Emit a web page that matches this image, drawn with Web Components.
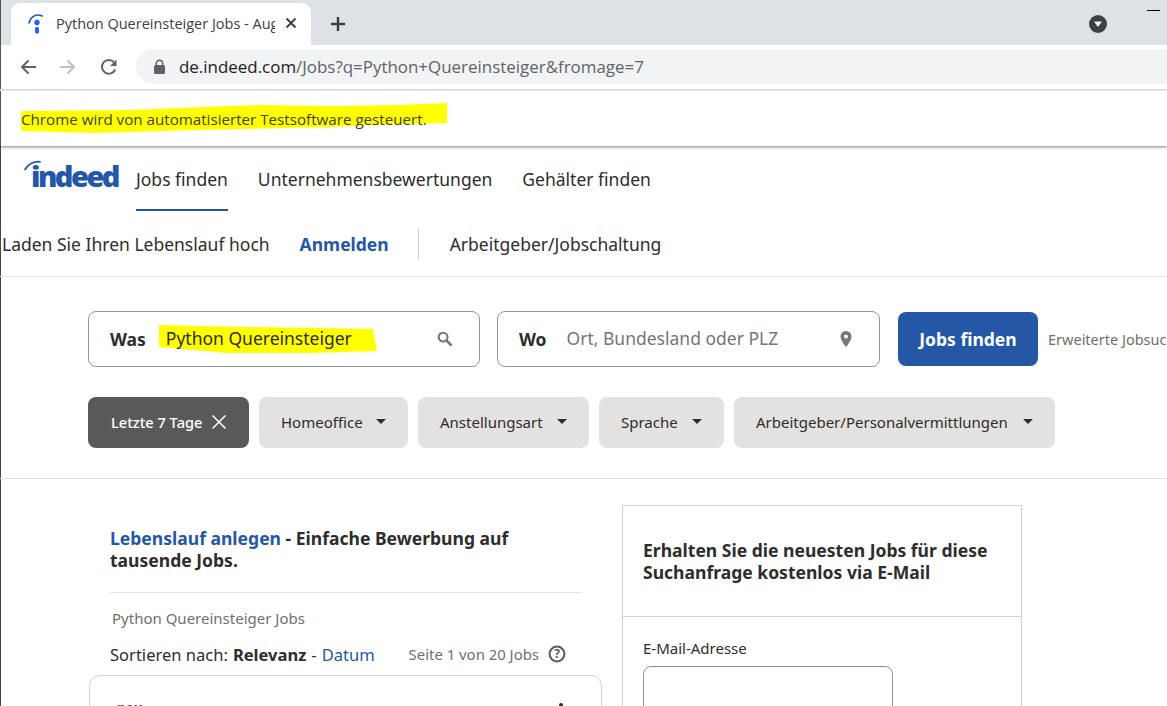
<!DOCTYPE html>
<html><head><meta charset="utf-8"><title>Python Quereinsteiger Jobs</title>
<style>
html,body{margin:0;padding:0;background:#fff}
body{width:1167px;height:706px;overflow:hidden;font-family:"Noto Sans","Open Sans",sans-serif;color:#2d2d2d}
</style></head><body>
<browser-chrome></browser-chrome>
<info-bar>Chrome wird von automatisierter Testsoftware gesteuert.</info-bar>
<site-page></site-page>
<script>
function def(name,html){customElements.define(name,class extends HTMLElement{constructor(){super();this.attachShadow({mode:'open'}).innerHTML=html}})}
def('browser-chrome',`<style>
:host{display:block;height:91px;font-family:"Noto Sans",sans-serif}
.strip{height:45px;background:#dee1e6;display:flex;align-items:flex-end;padding-left:11px;position:relative;box-shadow:inset 1px 0 #555}
.tab{width:300px;height:42px;background:#fff;border-radius:9px 9px 0 0;box-sizing:border-box;display:flex;align-items:center;padding-left:17px;position:relative;margin-right:19px}
.tab span{font:14.5px/20px "Open Sans","Noto Sans",sans-serif;color:#3c4043;margin-left:12px;width:219px;white-space:nowrap;overflow:hidden}
.tab svg.x{margin-left:10px;position:relative;top:-1px}
.plus{margin-bottom:13px}
.prof{position:absolute;left:1089px;top:15px}
.min{position:absolute;left:1147px;top:10px;width:13px;height:1px;background:#000}
.bar{height:45px;box-sizing:border-box;border-bottom:1px solid #dcdcdc;display:flex;align-items:center;padding-left:19px;background:#fff;box-shadow:inset 1px 0 #555}
.addr{margin-left:18px;flex:1;height:35px;margin-top:-1px;background:#f1f3f4;border-radius:18px 0 0 18px;display:flex;align-items:center;padding-left:17px;font:16.93px/24px "Open Sans","Noto Sans",sans-serif;color:#5f6368;white-space:nowrap}
.addr b{font-weight:400;color:#202124}
.addr svg{margin-right:13px}
.ic{display:block;margin-right:22px}
</style>
<div class="strip">
 <div class="tab">
  <svg width="16" height="20" viewBox="0 0 16 20"><path d="M1 9C2 4 6 1 10 1c1.500 0 3 .4 4 1" fill="none" stroke="#2557a7" stroke-width="1.700" stroke-linecap="round"/><circle cx="9" cy="8.500" r="2.700" fill="#2164f3"/><rect x="7" y="13" width="4" height="6.500" rx="1.500" fill="#2164f3"/></svg>
  <span>Python Quereinsteiger Jobs - Augsburg</span>
  <svg class="x" width="12" height="12" viewBox="0 0 12 12"><path d="M1.500 1.500l9 9M10.500 1.500l-9 9" stroke="#3c4043" stroke-width="1.900"/></svg>
 </div>
 <svg class="plus" width="16" height="16" viewBox="0 0 16 16"><path d="M8 1v14M1 8h14" stroke="#3c4043" stroke-width="2.400"/></svg>
 <svg class="prof" width="18" height="18" viewBox="0 0 18 18"><circle cx="9" cy="9" r="9" fill="#3c4043"/><path d="M5 6.500h8L9 12z" fill="#f1f3f4"/></svg>
 <div class="min"></div>
</div>
<div class="bar">
 <svg class="ic" width="18" height="18" viewBox="0 0 18 18"><path d="M17 9H3M9.500 2.500L3 9l6.500 6.500" fill="none" stroke="#5f6368" stroke-width="2"/></svg>
 <svg class="ic" style="margin-right:23px" width="18" height="18" viewBox="0 0 18 18"><path d="M1 9h14M8.500 2.500L15 9l-6.500 6.500" fill="none" stroke="#bdc1c6" stroke-width="2"/></svg>
 <svg class="ic" style="margin-right:0" width="18" height="18" viewBox="0 0 18 18"><path d="M15.200 11.500A6.900 6.900 0 1 1 14 4.200" fill="none" stroke="#5f6368" stroke-width="2"/><path d="M16.500 1.500V8h-6.500z" fill="#5f6368"/></svg>
 <div class="addr"><svg width="13" height="16" viewBox="0 0 13 16"><path d="M3.300 6.500V4.500a3.200 3.200 0 0 1 6.400 0v2" fill="none" stroke="#5f6368" stroke-width="1.500"/><rect x="1" y="6" width="11" height="9" rx="1.500" fill="#5f6368"/></svg><span><b>de.indeed.com</b>/Jobs?q=Python+Quereinsteiger&amp;fromage=7</span></div>
</div>`);
def('info-bar',`<style>
:host{display:block;height:55px;position:relative;background:#fff;box-shadow:inset 1px 0 #555,0 1px 3px rgba(0,0,0,.5);z-index:2}
.t{position:relative;padding:18px 0 0 21px;font:15.17px/20px "Open Sans","Noto Sans",sans-serif;color:#44421a;white-space:nowrap}
svg{position:absolute;left:0;top:0}
</style><svg width="470" height="55" viewBox="0 0 470 55"><path d="M21 20L130 19 228 15 260 14 330 15 400 14 447 12 447 32 400 33 330 36 200 39 95 42 21 40z" fill="#ffff00"/></svg><div class="t"><slot></slot></div>`);
def('nav-link',`<style>
:host{display:block;font-size:17.500px;line-height:24px;color:#2d2d2d;white-space:nowrap}
</style><slot></slot>`);
def('site-header',`<style>
:host{display:block;height:130px;box-sizing:border-box;border-bottom:1px solid #e4e2e0}
.r1{display:flex;height:64px;padding-left:24px;align-items:flex-start}
.logo{width:95px;height:30px;position:relative;margin-top:13px;margin-right:17px;flex:none}
.logo b{position:absolute;left:7px;top:-3px;font:800 29px/38px "Open Sans","Noto Sans",sans-serif;letter-spacing:-2.500px;color:#2557a7}
.logo svg{position:absolute;left:0;top:0}
.item{padding-top:20px;height:44px;margin-right:30px;box-sizing:content-box}
.item.on{border-bottom:2px solid #2557a7;height:42px}
.r2{display:flex;align-items:center;height:50px;padding-left:2px;margin-top:8px}
.sep{width:1px;height:30px;background:#d4d2d0;margin:0 31px 0 29px}
.bl{color:#2557a7;font-weight:700;margin-left:30px}
</style>
<div class="r1"><div class="logo"><svg width="24" height="20" viewBox="0 0 24 20"><path d="M1 9.500C4 4 10 1 16 1.800" fill="none" stroke="#2557a7" stroke-width="1.700" stroke-linecap="round"/></svg><b>indeed</b></div>
<nav-link class="item on">Jobs finden</nav-link><nav-link class="item">Unternehmensbewertungen</nav-link><nav-link class="item">Gehälter finden</nav-link></div>
<div class="r2"><nav-link>Laden Sie Ihren Lebenslauf hoch</nav-link><nav-link class="bl">Anmelden</nav-link><div class="sep"></div><nav-link>Arbeitgeber/Jobschaltung</nav-link></div>`);
def('search-field',`<style>
:host{display:flex;align-items:center;height:56px;box-sizing:border-box;border:1px solid #949494;border-radius:8px;padding:0 21px 0 21px;position:relative;background:#fff}
</style><slot></slot>`);
def('filter-chip',`<style>
:host{display:flex;align-items:center;height:51px;box-sizing:border-box;background:#e4e2e0;border-radius:8px;padding:0 22px 2px 22px;font-size:15px;color:#2d2d2d;white-space:nowrap;flex:none}
i{display:block;width:0;height:0;margin-left:auto;border:5px solid transparent;border-top:5px solid #2d2d2d;border-bottom:0}
</style><slot></slot><i></i>`);
def('filter-active',`<style>
:host{display:flex;align-items:center;height:51px;box-sizing:border-box;background:#595959;border-radius:8px;padding:0 22px 2px 23px;font-size:14.600px;color:#fff;white-space:nowrap;gap:10px;font-weight:500;width:161px;flex:none}
</style>Letzte 7 Tage<svg width="14" height="14" viewBox="0 0 14 14"><path d="M.5.500l13 13M13.500.500l-13 13" stroke="#fff" stroke-width="1.500"/></svg>`);
def('alert-card',`<style>
:host{display:block;width:400px;height:202px;box-sizing:border-box;border:1px solid #d4d2d0;border-bottom:0;flex:none;margin-top:26px}
.h{height:111px;box-sizing:border-box;border-bottom:1px solid #d4d2d0;padding:33px 20px 0;font:700 17.550px/22px "Noto Sans",sans-serif;color:#2d2d2d}
.b{padding:21px 20px 0;font-size:15px;line-height:20px}
.in{margin-top:8px;width:250px;height:60px;box-sizing:border-box;border:1px solid #949494;border-radius:8px}
</style><div class="h">Erhalten Sie die neuesten Jobs für diese Suchanfrage kostenlos via E-Mail</div><div class="b">E-Mail-Adresse<div class="in"></div></div>`);
def('results-col',`<style>
:host{display:block;width:513px;margin-left:89px;margin-right:20px;flex:none;position:relative}
.promo{margin:48px 0 0 21px;width:440px;height:65px;font:700 17.550px/22px "Noto Sans",sans-serif;color:#2d2d2d;box-sizing:border-box}
.promo a{color:#2557a7}
.rule{height:1px;background:#e4e2e0;margin:0 20px 0 21px;width:472px}
.q{margin:15px 0 0 23px;font-size:15px;line-height:20px;color:#6f6f6f}
.s{display:flex;align-items:center;margin:14px 0 0 21px;height:24px;font-size:16.550px;white-space:nowrap}
.s b{font-weight:700;margin:0 5px}.s a{color:#2557a7;margin-left:5px}
.p{font-size:14.900px;color:#6f6f6f;margin-left:34px}
.p+svg{margin-left:9px}
.card{margin-top:9px;height:60px;border:1px solid #d4d2d0;border-radius:11px;position:relative;overflow:hidden}
.clip{position:absolute;left:27px;top:24px;font-size:13.500px;font-weight:700;line-height:16px;color:#9d2b6b}
.dot{position:absolute;left:469px;top:27px;width:4px;height:4px;border-radius:50%;background:#2d2d2d}
</style>
<div class="promo"><a>Lebenslauf anlegen</a> - Einfache Bewerbung auf tausende Jobs.</div><div class="rule"></div>
<div class="q">Python Quereinsteiger Jobs</div>
<div class="s">Sortieren nach:<b>Relevanz</b>-<a>Datum</a><span class="p">Seite 1 von 20 Jobs</span><svg width="18" height="18" viewBox="0 0 18 18"><circle cx="9" cy="9" r="7.400" fill="none" stroke="#595959" stroke-width="2"/><text x="9" y="13.300" text-anchor="middle" font-size="12" font-weight="700" fill="#595959" font-family="Noto Sans">?</text></svg></div>
<div class="card"><div class="clip">neu</div><div class="dot"></div></div>`);
def('site-page',`<style>
:host{display:block;position:relative;height:560px;overflow:hidden;box-sizing:border-box;padding-top:1px;box-shadow:inset 1px 0 #444}
.search{display:flex;padding:34px 0 0 88px;align-items:center}
.w{width:392px;flex:none}.o{width:383px;flex:none;margin-left:17px}
.k{margin-right:20px;font-weight:700;font-size:17.500px}
.val{position:relative;flex:1;white-space:nowrap;font-size:17.500px;padding-bottom:2px}
.val svg{position:absolute;left:-7px;top:-1px}
.val span{position:relative}
.ph{color:#767676;flex:1;white-space:nowrap;font-size:17.500px;padding-bottom:2px}
.btn{margin-left:18px;width:140px;height:54px;background:#2557a7;color:#fff;border-radius:8px;display:flex;align-items:center;justify-content:center;font-weight:700;font-size:17.500px;flex:none}
.adv{margin-left:10px;font-size:14.500px;color:#6f6f6f;white-space:nowrap}
.filters{display:flex;gap:10px;padding:30px 0 30px 88px;border-bottom:1px solid #e4e2e0}
.main{display:flex}
</style>
<site-header></site-header>
<div class="search">
 <search-field class="w"><span class="k">Was</span><div class="val"><svg width="230" height="44" viewBox="0 0 230 44"><path d="M0 0L88 2 214 4 218 26 150 28 68 28 0 22z" fill="#ff0"/></svg><span>Python Quereinsteiger</span></div><svg style="margin-right:5px" width="16" height="16" viewBox="0 0 17 17"><circle cx="6.500" cy="6.500" r="4.700" fill="none" stroke="#767676" stroke-width="2.200"/><path d="M10 10l5.500 5.500" stroke="#767676" stroke-width="2.800"/></svg></search-field>
 <search-field class="o"><span class="k">Wo</span><span class="ph">Ort, Bundesland oder PLZ</span><svg width="12" height="16" viewBox="0 0 12 16" style="margin-right:6px"><path fill-rule="evenodd" d="M6 0a5.500 5.500 0 0 0-5.500 5.500C.5 9.500 6 16 6 16s5.500-6.500 5.500-10.500A5.500 5.500 0 0 0 6 0zm0 7.500a2 2 0 1 1 0-4 2 2 0 0 1 0 4z" fill="#767676"/></svg></search-field>
 <div class="btn">Jobs finden</div><div class="adv">Erweiterte Jobsuche</div>
</div>
<div class="filters">
 <filter-active></filter-active>
 <filter-chip style="width:149px">Homeoffice</filter-chip><filter-chip style="width:171px">Anstellungsart</filter-chip><filter-chip style="width:125px">Sprache</filter-chip><filter-chip style="width:321px">Arbeitgeber/Personalvermittlungen</filter-chip>
</div>
<div class="main"><results-col></results-col><alert-card></alert-card></div>`);
</script>
</body></html>
